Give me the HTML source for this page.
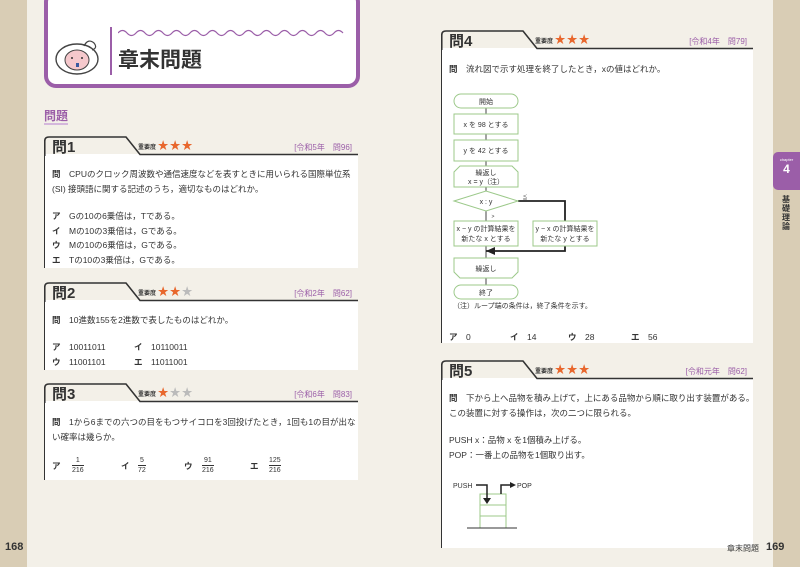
<!DOCTYPE html><html><head><meta charset="utf-8"><style>
*{margin:0;padding:0;box-sizing:border-box}
body{width:800px;height:567px;background:#f3f0e8;position:relative;overflow:hidden;font-family:"Liberation Sans","Noto Sans CJK JP",sans-serif;color:#333}
.a{position:absolute}
.strip{position:absolute;top:0;height:567px;background:#d9cdb5}
.card{position:absolute}
.card svg.t{position:absolute;left:0;top:0}
.card .body{position:absolute;left:0;right:0;background:#fff;border-left:1.5px solid #333}
.q{position:absolute;left:8px;top:3px;font-size:15px;line-height:17px;font-weight:bold;color:#333}
.imp{position:absolute;top:4px;line-height:12px;font-size:6px;font-weight:bold;color:#333}
.st{font-size:11px;color:#e8672d;letter-spacing:1px}
.st i{font-style:normal;color:#bbb}
.src{position:absolute;right:6px;top:6px;font-size:8px;color:#9b5ea8}
.tx{position:absolute;font-size:8.5px;line-height:14.5px;white-space:nowrap}
.tx b{font-weight:bold}
</style></head><body>
<div class="strip" style="left:0;width:27px"></div>
<div class="strip" style="left:773px;width:27px"></div>

<div class="a" style="left:44px;top:-10px;width:316px;height:98px;border:4px solid #9b5ea8;border-radius:12px;background:#fff"></div>
<svg class="a" style="left:54px;top:36px" width="48" height="40" viewBox="0 0 48 40"><ellipse cx="23" cy="23" rx="21" ry="15" fill="#fff" stroke="#444" stroke-width="1.4"/><path d="M30 10 q4-8 10-3 q4 5-2 7" fill="none" stroke="#444" stroke-width="1.2"/><ellipse cx="23" cy="24" rx="12" ry="10" fill="#f5c8cc" stroke="#444" stroke-width="1"/><circle cx="18" cy="22" r="1" fill="#333"/><circle cx="28" cy="22" r="1" fill="#333"/><path d="M22 27h3v4h-3z" fill="#3a5aa0"/></svg>
<div class="a" style="left:110px;top:27px;width:1.5px;height:48px;background:#9b5ea8"></div>
<svg class="a" style="left:118px;top:28px" width="228" height="10"><path d="M0 5 q4.5-5 9 0 t9 0 t9 0 t9 0 t9 0 t9 0 t9 0 t9 0 t9 0 t9 0 t9 0 t9 0 t9 0 t9 0 t9 0 t9 0 t9 0 t9 0 t9 0 t9 0 t9 0 t9 0 t9 0 t9 0 t9 0" fill="none" stroke="#9b5ea8" stroke-width="1.2"/></svg>
<div class="a" style="left:118px;top:44px;font-size:21px;font-weight:bold;color:#333">章末問題</div>
<div class="a" style="left:44px;top:109px;font-size:12px;font-weight:bold;color:#9b5ea8;border-bottom:2px solid #d4b7dc;line-height:14px">問題</div>

<div class="card" style="left:44px;top:136px;width:314px;height:132px">
<div class="body" style="top:18px;bottom:0"></div>
<svg class="t" width="314" height="20"><path d="M0.75 20V5Q0.75 1 5 1H82L96 18.5H314" fill="none" stroke="#333" stroke-width="1.6"/></svg>
<div class="q">問1</div>
<div class="imp" style="left:94px">重要度 <span class="st">★★★</span></div>
<div class="src">[令和5年　問96]</div>
<div class="tx" style="left:8px;top:31px"><b>問</b>　CPUのクロック周波数や通信速度などを表すときに用いられる国際単位系<br>(SI) 接頭語に関する記述のうち，適切なものはどれか。</div>
<div class="tx" style="left:8px;top:73px"><b>ア</b>　Gの10の6乗倍は，Tである。<br><b>イ</b>　Mの10の3乗倍は，Gである。<br><b>ウ</b>　Mの10の6乗倍は，Gである。<br><b>エ</b>　Tの10の3乗倍は，Gである。</div>
</div>

<div class="card" style="left:44px;top:282px;width:314px;height:88px">
<div class="body" style="top:18px;bottom:0"></div>
<svg class="t" width="314" height="20"><path d="M0.75 20V5Q0.75 1 5 1H82L96 18.5H314" fill="none" stroke="#333" stroke-width="1.6"/></svg>
<div class="q">問2</div>
<div class="imp" style="left:94px">重要度 <span class="st">★★<i>★</i></span></div>
<div class="src">[令和2年　問62]</div>
<div class="tx" style="left:8px;top:31px"><b>問</b>　10進数155を2進数で表したものはどれか。</div>
<div class="tx" style="left:8px;top:58px"><b>ア</b>　10011011<br><b>ウ</b>　11001101</div>
<div class="tx" style="left:90px;top:58px"><b>イ</b>　10110011<br><b>エ</b>　11011001</div>
</div>

<div class="card" style="left:44px;top:383px;width:314px;height:97px">
<div class="body" style="top:18px;bottom:0"></div>
<svg class="t" width="314" height="20"><path d="M0.75 20V5Q0.75 1 5 1H82L96 18.5H314" fill="none" stroke="#333" stroke-width="1.6"/></svg>
<div class="q">問3</div>
<div class="imp" style="left:94px">重要度 <span class="st">★<i>★★</i></span></div>
<div class="src">[令和6年　問83]</div>
<div class="tx" style="left:8px;top:32px"><b>問</b>　1から6までの六つの目をもつサイコロを3回投げたとき，1回も1の目が出な<br>い確率は幾らか。</div>
<div class="tx" style="left:8px;top:76px"><b>ア</b></div>
<div class="tx" style="left:28px;top:73px;font-size:7px;line-height:9px;text-align:center"><span style="border-bottom:1px solid #333;display:block">1</span>216</div>
<div class="tx" style="left:77px;top:76px"><b>イ</b></div>
<div class="tx" style="left:94px;top:73px;font-size:7px;line-height:9px;text-align:center"><span style="border-bottom:1px solid #333;display:block">5</span>72</div>
<div class="tx" style="left:140px;top:76px"><b>ウ</b></div>
<div class="tx" style="left:158px;top:73px;font-size:7px;line-height:9px;text-align:center"><span style="border-bottom:1px solid #333;display:block">91</span>216</div>
<div class="tx" style="left:206px;top:76px"><b>エ</b></div>
<div class="tx" style="left:225px;top:73px;font-size:7px;line-height:9px;text-align:center"><span style="border-bottom:1px solid #333;display:block">125</span>216</div>
</div>

<div class="card" style="left:441px;top:30px;width:312px;height:313px">
<div class="body" style="top:18px;bottom:0"></div>
<svg class="t" width="312" height="20"><path d="M0.75 20V5Q0.75 1 5 1H82L96 18.5H312" fill="none" stroke="#333" stroke-width="1.6"/></svg>
<div class="q">問4</div>
<div class="imp" style="left:94px">重要度 <span class="st">★★★</span></div>
<div class="src">[令和4年　問79]</div>
<div class="tx" style="left:8px;top:32px"><b>問</b>　流れ図で示す処理を終了したとき，xの値はどれか。</div>
<div class="tx" style="left:8px;top:300px"><b>ア</b>　0</div>
<div class="tx" style="left:69px;top:300px"><b>イ</b>　14</div>
<div class="tx" style="left:127px;top:300px"><b>ウ</b>　28</div>
<div class="tx" style="left:190px;top:300px"><b>エ</b>　56</div>
</div>
<svg class="a" style="left:441px;top:90px" width="180" height="215">
<g stroke="#444" stroke-width="1"><path d="M45 18v6M45 44v6M45 71v5M45 97v4M45 121v10M45 156v12M45 188v7"/></g>
<path d="M77 111H124V161H45" fill="none" stroke="#222" stroke-width="1.8"/><path d="M45 161l9-4v8z" fill="#222"/>
<g fill="#fff" stroke="#9cc98a" stroke-width="1"><rect x="13" y="4" width="64" height="14" rx="7"/><rect x="13" y="24" width="64" height="20"/><rect x="13" y="50" width="64" height="21"/><path d="M19 76H71L77 82V97H13V82Z"/><path d="M13 111L45 101L77 111L45 121Z"/><rect x="13" y="131" width="64" height="25"/><rect x="92" y="131" width="64" height="25"/><path d="M13 168H77V182L71 188H19L13 182Z"/><rect x="13" y="195" width="64" height="14" rx="7"/></g>
<g font-size="7" text-anchor="middle" fill="#333" font-family="Liberation Sans,Noto Sans CJK JP,sans-serif"><text x="45" y="14">開始</text><text x="45" y="37">x を 98 とする</text><text x="45" y="63">y を 42 とする</text><text x="45" y="85">繰返し</text><text x="45" y="94">x = y（注）</text><text x="45" y="114">x : y</text><text x="45" y="141">x − y の計算結果を</text><text x="45" y="151">新たな x とする</text><text x="124" y="141">y − x の計算結果を</text><text x="124" y="151">新たな y とする</text><text x="45" y="181">繰返し</text><text x="45" y="205">終了</text><text x="52" y="128" font-size="5">&gt;</text><text x="84" y="109" font-size="5">≦</text></g>
</svg>
<div class="tx" style="left:453px;top:300px;font-size:7px">（注）ループ端の条件は，終了条件を示す。</div>

<div class="card" style="left:441px;top:360px;width:312px;height:188px">
<div class="body" style="top:18px;bottom:0"></div>
<svg class="t" width="312" height="20"><path d="M0.75 20V5Q0.75 1 5 1H82L96 18.5H312" fill="none" stroke="#333" stroke-width="1.6"/></svg>
<div class="q">問5</div>
<div class="imp" style="left:94px">重要度 <span class="st">★★★</span></div>
<div class="src">[令和元年　問62]</div>
<div class="tx" style="left:8px;top:31px"><b>問</b>　下から上へ品物を積み上げて，上にある品物から順に取り出す装置がある。<br>この装置に対する操作は，次の二つに限られる。</div>
<div class="tx" style="left:8px;top:73px">PUSH x：品物 x を1個積み上げる。<br>POP：一番上の品物を1個取り出す。</div>
</div>
<svg class="a" style="left:450px;top:478px" width="110" height="52">
<g fill="none" stroke="#9cc98a"><rect x="30" y="16" width="26" height="34"/><path d="M30 27h26M30 38h26"/></g>
<path d="M17 50h50" stroke="#333"/>
<path d="M26 7h11v15M51 16V7h10" fill="none" stroke="#222" stroke-width="1.5"/><path d="M33 20h8l-4 6z M60 4v6l6-3z" fill="#222"/>
<g font-size="7" fill="#333" font-family="Liberation Sans,sans-serif"><text x="3" y="10">PUSH</text><text x="67" y="10">POP</text></g>
</svg>

<div class="a" style="left:773px;top:152px;width:27px;height:38px;background:#9b5ea8;border-radius:5px 0 0 5px;color:#fff;text-align:center"><div style="font-size:4px;margin-top:5px">chapter</div><div style="font-size:12px;font-weight:bold">4</div></div>
<div class="a" style="left:782px;top:195px;width:10px;font-size:8px;font-weight:bold;line-height:9px;color:#333">基礎理論</div>

<div class="a" style="left:5px;top:541px;font-size:11px;font-weight:bold">168</div>
<div class="a" style="left:727px;top:543px;font-size:8px">章末問題</div>
<div class="a" style="left:766px;top:541px;font-size:11px;font-weight:bold">169</div>
</body></html>
